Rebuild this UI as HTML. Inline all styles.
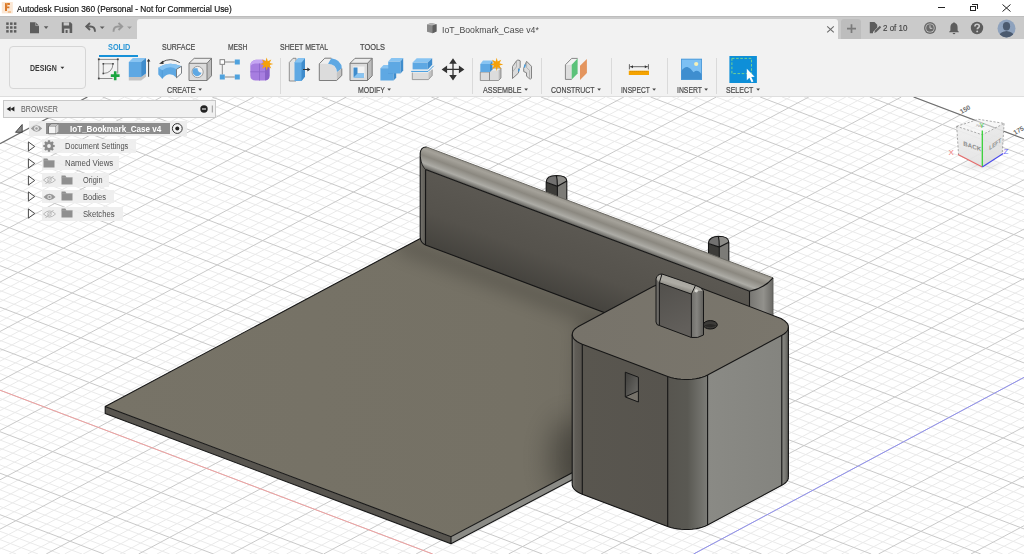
<!DOCTYPE html>
<html><head><meta charset="utf-8">
<style>
*{margin:0;padding:0;box-sizing:border-box}
html,body{width:1024px;height:554px;overflow:hidden;background:#fff;font-family:"Liberation Sans",sans-serif;position:relative}
.a{position:absolute}
#title{left:0;top:0;width:1024px;height:16px;background:#fff}
#tabs{left:0;top:16px;width:1024px;height:23px;background:#cacaca;border-top:1px solid #bdbdbd}
#tab{left:137px;top:19px;width:701px;height:20px;background:#f2f2f2;border-radius:3px 3px 0 0}
#tool{left:0;top:39px;width:1024px;height:58px;background:#f2f2f2}
#vp{left:0;top:97px;width:1024px;height:457px}
.t{position:absolute;white-space:nowrap;line-height:1;transform-origin:0 50%}
</style></head><body>
<div class="a" id="title"></div>
<div class="a" id="tabs"></div>
<div class="a" id="tab"></div>
<div class="a" id="tool"></div>
<svg class="a" id="vp" width="1024" height="457" viewBox="0 97 1024 457">
<defs>
<linearGradient id="gPlate" gradientUnits="userSpaceOnUse" x1="105" y1="400" x2="700" y2="400"><stop offset="0" stop-color="#777367"/><stop offset="0.7" stop-color="#757165"/><stop offset="1" stop-color="#6e6a60"/></linearGradient>
<linearGradient id="gWall" gradientUnits="userSpaceOnUse" x1="600" y1="235.1" x2="574.8" y2="301.6"><stop offset="0" stop-color="#5b5852"/><stop offset="0.55" stop-color="#55524c"/><stop offset="1" stop-color="#45433e"/></linearGradient>
<linearGradient id="aoWall" gradientUnits="userSpaceOnUse" x1="500" y1="273.1" x2="492.9" y2="291.8"><stop offset="0" stop-color="#000" stop-opacity="0.2"/><stop offset="1" stop-color="#000" stop-opacity="0"/></linearGradient>
<linearGradient id="aoBox" gradientUnits="userSpaceOnUse" x1="572" y1="0" x2="530" y2="0"><stop offset="0" stop-color="#000" stop-opacity="0.16"/><stop offset="1" stop-color="#000" stop-opacity="0"/></linearGradient>
<filter id="fBlur" x="-20%" y="-20%" width="140%" height="140%"><feGaussianBlur stdDeviation="9"/></filter>
<filter id="fBlur2" x="-100%" y="-100%" width="300%" height="300%"><feGaussianBlur stdDeviation="14"/></filter>
<clipPath id="cpPlate"><path d="M105.2 406.4L420.3 238.4L769 369L451 536.7Z"/></clipPath>
<linearGradient id="gWallL" x1="0" y1="0" x2="1" y2="0"><stop offset="0" stop-color="#75736d"/><stop offset="1" stop-color="#57554f"/></linearGradient>
<linearGradient id="gWallR" x1="0" y1="0" x2="1" y2="0"><stop offset="0" stop-color="#777672"/><stop offset="0.6" stop-color="#92918c"/><stop offset="1" stop-color="#6a6965"/></linearGradient>
<linearGradient id="gLip" gradientUnits="userSpaceOnUse" x1="600" y1="212.5" x2="592.4" y2="232.6"><stop offset="0" stop-color="#96938b"/><stop offset="0.15" stop-color="#a5a29a"/><stop offset="0.42" stop-color="#8b8880"/><stop offset="0.75" stop-color="#adaca6"/><stop offset="0.92" stop-color="#767570"/><stop offset="1" stop-color="#5a5954"/></linearGradient>
<linearGradient id="gBoxL" x1="0" y1="0" x2="1" y2="0"><stop offset="0" stop-color="#59564f"/><stop offset="1" stop-color="#57544e"/></linearGradient>
<linearGradient id="gBoxR" x1="0" y1="0" x2="1" y2="0"><stop offset="0" stop-color="#8a8a85"/><stop offset="1" stop-color="#84847f"/></linearGradient>
<linearGradient id="gBoxC" x1="0" y1="0" x2="1" y2="0"><stop offset="0" stop-color="#57554f"/><stop offset="0.5" stop-color="#5a5953"/><stop offset="1" stop-color="#7c7c77"/></linearGradient>
<linearGradient id="gBoxCL" x1="0" y1="0" x2="1" y2="0"><stop offset="0" stop-color="#7a7872"/><stop offset="0.3" stop-color="#605d57"/><stop offset="1" stop-color="#57544e"/></linearGradient>
<linearGradient id="gBoxCR" x1="0" y1="0" x2="1" y2="0"><stop offset="0" stop-color="#8a8a85"/><stop offset="0.5" stop-color="#7a7a75"/><stop offset="1" stop-color="#5a5955"/></linearGradient>
<linearGradient id="gTop" x1="0" y1="0" x2="1" y2="0"><stop offset="0" stop-color="#77736a"/><stop offset="1" stop-color="#7a766c"/></linearGradient>
<linearGradient id="gSlot" x1="0" y1="0" x2="1" y2="1"><stop offset="0" stop-color="#3f3e3b"/><stop offset="1" stop-color="#72716d"/></linearGradient>
<linearGradient id="gPinF" x1="0" y1="0" x2="0.3" y2="1"><stop offset="0" stop-color="#52504c"/><stop offset="1" stop-color="#625f5b"/></linearGradient>
<linearGradient id="gPinR" x1="0" y1="0" x2="1" y2="0"><stop offset="0" stop-color="#6f6e6a"/><stop offset="0.45" stop-color="#858480"/><stop offset="1" stop-color="#5f5e5a"/></linearGradient>
<linearGradient id="gPinT" gradientUnits="userSpaceOnUse" x1="678" y1="279" x2="675" y2="289"><stop offset="0" stop-color="#a7a59e"/><stop offset="0.5" stop-color="#aeaca5"/><stop offset="1" stop-color="#85837c"/></linearGradient>
</defs>
<path d="M913.6 97.0L1024.0 138.8M891.7 97.0L1024.0 147.1M847.8 97.0L1024.0 163.7M825.9 97.0L1024.0 172.0M804.0 97.0L1024.0 180.3M782.1 97.0L1024.0 188.6M738.2 97.0L1024.0 205.2M716.3 97.0L1024.0 213.5M694.4 97.0L1024.0 221.8M672.4 97.0L1024.0 230.1M628.6 97.0L1024.0 246.7M606.7 97.0L1024.0 255.0M584.8 97.0L1024.0 263.3M562.8 97.0L1024.0 271.6M519.0 97.0L1024.0 288.2M497.1 97.0L1024.0 296.5M475.2 97.0L1024.0 304.8M453.2 97.0L1024.0 313.1M409.4 97.0L1024.0 329.7M387.5 97.0L1024.0 338.0M365.5 97.0L1024.0 346.3M343.6 97.0L1024.0 354.6M299.8 97.0L1024.0 371.2M277.9 97.0L1024.0 379.5M255.9 97.0L1024.0 387.8M234.0 97.0L1024.0 396.1M190.2 97.0L1024.0 412.7M168.2 97.0L1024.0 421.0M146.3 97.0L1024.0 429.3M124.4 97.0L1024.0 437.6M84.6 98.5L1024.0 454.2M75.5 103.4L1024.0 462.5M66.4 108.2L1024.0 470.8M57.3 113.1L1024.0 479.1M39.1 122.8L1024.0 495.7M30.0 127.7L1024.0 504.0M20.9 132.5L1024.0 512.3M11.8 137.4L1024.0 520.6M0.0 149.5L1024.0 537.2M0.0 157.8L1024.0 545.5M0.0 166.1L1024.0 553.8M0.0 174.4L1002.7 554.0M0.0 191.0L958.9 554.0M0.0 199.3L936.9 554.0M0.0 207.6L915.0 554.0M0.0 215.9L893.1 554.0M0.0 232.5L849.2 554.0M0.0 240.8L827.3 554.0M0.0 249.1L805.4 554.0M0.0 257.4L783.5 554.0M0.0 274.0L739.6 554.0M0.0 282.3L717.7 554.0M0.0 290.6L695.8 554.0M0.0 298.9L673.9 554.0M0.0 315.5L630.0 554.0M0.0 323.8L608.1 554.0M0.0 332.1L586.2 554.0M0.0 340.4L564.3 554.0M0.0 357.0L520.4 554.0M0.0 365.3L498.5 554.0M0.0 373.6L476.6 554.0M0.0 381.9L454.6 554.0M0.0 398.5L410.8 554.0M0.0 406.8L388.9 554.0M0.0 415.1L367.0 554.0M0.0 423.4L345.0 554.0M0.0 440.0L301.2 554.0M0.0 448.3L279.3 554.0M0.0 456.6L257.3 554.0M0.0 464.9L235.4 554.0M-0.0 481.5L191.6 554.0M0.0 489.8L169.7 554.0M0.0 498.1L147.7 554.0M0.0 506.4L125.8 554.0M0.0 523.0L82.0 554.0M0.0 531.3L60.1 554.0M0.0 539.6L38.1 554.0M0.0 547.9L16.2 554.0M87.4 97.0L0.0 143.7M105.9 97.0L0.0 153.6M124.4 97.0L0.0 163.5M142.9 97.0L0.0 173.4M179.9 97.0L-0.0 193.1M198.4 97.0L0.0 203.0M216.9 97.0L-0.0 212.9M235.4 97.0L0.0 222.8M272.4 97.0L0.0 242.6M290.9 97.0L0.0 252.4M309.4 97.0L0.0 262.3M327.9 97.0L0.0 272.2M364.9 97.0L0.0 292.0M383.4 97.0L0.0 301.9M401.8 97.0L0.0 311.8M420.3 97.0L0.0 321.6M457.3 97.0L0.0 341.4M475.8 97.0L0.0 351.3M494.3 97.0L0.0 361.2M512.8 97.0L0.0 371.1M549.8 97.0L0.0 390.8M568.3 97.0L0.0 400.7M586.8 97.0L0.0 410.6M605.3 97.0L0.0 420.5M642.3 97.0L0.0 440.3M660.8 97.0L0.0 450.2M679.3 97.0L0.0 460.0M697.8 97.0L0.0 469.9M734.8 97.0L0.0 489.7M753.3 97.0L0.0 499.6M771.8 97.0L0.0 509.5M790.3 97.0L0.0 519.4M827.3 97.0L0.0 539.1M845.8 97.0L0.0 549.0M864.3 97.0L9.2 554.0M882.8 97.0L27.7 554.0M917.2 98.4L64.7 554.0M928.0 102.5L83.2 554.0M938.9 106.6L101.6 554.0M949.7 110.7L120.1 554.0M971.3 118.9L157.1 554.0M982.2 123.0L175.6 554.0M993.0 127.1L194.1 554.0M1003.8 131.2L212.6 554.0M1024.0 140.1L249.6 554.0M1024.0 150.0L268.1 554.0M1024.0 159.9L286.6 554.0M1024.0 169.8L305.1 554.0M1024.0 189.6L342.1 554.0M1024.0 199.5L360.6 554.0M1024.0 209.3L379.1 554.0M1024.0 219.2L397.6 554.0M1024.0 239.0L434.6 554.0M1024.0 248.9L453.1 554.0M1024.0 258.8L471.6 554.0M1024.0 268.7L490.1 554.0M1024.0 288.4L527.1 554.0M1024.0 298.3L545.6 554.0M1024.0 308.2L564.1 554.0M1024.0 318.1L582.6 554.0M1024.0 337.9L619.6 554.0M1024.0 347.7L638.1 554.0M1024.0 357.6L656.6 554.0M1024.0 367.5L675.1 554.0M1024.0 387.3L712.0 554.0M1024.0 397.2L730.5 554.0M1024.0 407.1L749.0 554.0M1024.0 416.9L767.5 554.0M1024.0 436.7L804.5 554.0M1024.0 446.6L823.0 554.0M1024.0 456.5L841.5 554.0M1024.0 466.4L860.0 554.0M1024.0 486.1L897.0 554.0M1024.0 496.0L915.5 554.0M1024.0 505.9L934.0 554.0M1024.0 515.8L952.5 554.0M1024.0 535.6L989.5 554.0M1024.0 545.4L1008.0 554.0" stroke="#eaeaea" stroke-width="1" fill="none"/>
<path d="M869.7 97.0L1024.0 155.4M760.1 97.0L1024.0 196.9M650.5 97.0L1024.0 238.4M540.9 97.0L1024.0 279.9M431.3 97.0L1024.0 321.4M321.7 97.0L1024.0 362.9M212.1 97.0L1024.0 404.4M102.5 97.0L1024.0 445.9M48.2 117.9L1024.0 487.4M2.8 142.2L1024.0 528.9M0.0 182.7L980.8 554.0M0.0 224.2L871.2 554.0M0.0 265.7L761.6 554.0M0.0 307.2L651.9 554.0M0.0 348.7L542.3 554.0M0.0 390.2L432.7 554.0M0.0 431.7L323.1 554.0M0.0 473.2L213.5 554.0M0.0 514.7L103.9 554.0M161.4 97.0L0.0 183.3M253.9 97.0L0.0 232.7M346.4 97.0L0.0 282.1M438.8 97.0L0.0 331.5M531.3 97.0L0.0 381.0M623.8 97.0L0.0 430.4M716.3 97.0L0.0 479.8M808.8 97.0L0.0 529.2M901.3 97.0L46.2 554.0M960.5 114.8L138.6 554.0M1014.7 135.3L231.1 554.0M1024.0 179.7L323.6 554.0M1024.0 229.1L416.1 554.0M1024.0 278.5L508.6 554.0M1024.0 328.0L601.1 554.0M1024.0 377.4L693.6 554.0M1024.0 426.8L786.0 554.0M1024.0 476.3L878.5 554.0M1024.0 525.7L971.0 554.0" stroke="#c9c9c9" stroke-width="1" fill="none"/>
<path d="M913.6 97.0L1024.0 138.8" stroke="#6e6e6e" stroke-width="1.2" fill="none"/>
<path d="M87.4 97.0L0.0 143.7" stroke="#6e6e6e" stroke-width="1.2" fill="none"/>
<path d="M0.0 390.2L432.7 554.0" stroke="#f0a0a0" stroke-width="1" fill="none"/>
<path d="M1024.0 377.4L693.6 554.0" stroke="#9090f0" stroke-width="1" fill="none"/>
<path d="M105.2 406.4L420.3 238.4L769.0 369.0L451.0 536.7Z" fill="url(#gPlate)"/>
<path d="M105.2 406.4L451.0 536.7L451.0 543.7L105.2 413.4Z" fill="#58554f"/>
<path d="M451.0 536.7L769.0 369.0L769.0 376.0L451.0 543.7Z" fill="#8b8b86"/>
<path d="M105.2 406.4L420.3 238.4L769.0 369.0L769.0 376.0L451.0 543.7L105.2 413.4Z" fill="none" stroke="#161616" stroke-width="1.1" stroke-linejoin="round"/>
<path d="M105.2 406.4L451.0 536.7L769.0 369.0M451.0 536.7L451.0 543.7" fill="none" stroke="#161616" stroke-width="1.1"/>
<g clip-path="url(#cpPlate)"><g filter="url(#fBlur)" opacity="0.22"><path d="M400 236L780 378L775 392L395 250Z" fill="#000"/><path d="M689.4 534.7L572 490L578.9 326.2L653 286L800 340L790 480Z" fill="#000"/></g><g filter="url(#fBlur2)" opacity="0.32"><ellipse cx="570" cy="458" rx="20" ry="40" fill="#000"/></g></g>
<path d="M546.2 182.3L557.4 186.3L557.4 208.3L546.2 204.3Z" fill="#3d3c39"/>
<path d="M557.4 186.3L566.8 181.0L566.8 203.0L557.4 208.3Z" fill="#7c7b77"/>
<path d="M546.2 182.3 C546.2 177.3 551.4 175.5 556.4 175.5 C561.9 175.5 566.8 176.5 566.8 181.0 L557.4 186.3 Z" fill="#727170"/>
<path d="M556.4 175.5 C561.9 175.5 566.8 176.5 566.8 181.0 L557.4 186.3 Z" fill="#8d8c88"/>
<path d="M546.2 204.3 L546.2 182.3 C546.2 177.3 551.4 175.5 556.4 175.5 C561.9 175.5 566.8 176.5 566.8 181.0 L566.8 203.0 M546.2 182.3 L557.4 186.3 L566.8 181.0 M556.4 175.5 Q557.4 179.5 557.4 186.3 L557.4 208.3" fill="none" stroke="#161616" stroke-width="1.1"/>
<path d="M708.5 243.6L719.3 247.1L719.3 269.1L708.5 265.6Z" fill="#3d3c39"/>
<path d="M719.3 247.1L728.8 242.3L728.8 264.3L719.3 269.1Z" fill="#7c7b77"/>
<path d="M708.5 243.6 C708.5 238.6 713.4 236.3 718.4 236.3 C723.9 236.3 728.8 237.8 728.8 242.3 L719.3 247.1 Z" fill="#727170"/>
<path d="M718.4 236.3 C723.9 236.3 728.8 237.8 728.8 242.3 L719.3 247.1 Z" fill="#8d8c88"/>
<path d="M708.5 265.6 L708.5 243.6 C708.5 238.6 713.4 236.3 718.4 236.3 C723.9 236.3 728.8 237.8 728.8 242.3 L728.8 264.3 M708.5 243.6 L719.3 247.1 L728.8 242.3 M718.4 236.3 Q719.3 240.3 719.3 247.1 L719.3 269.1" fill="none" stroke="#161616" stroke-width="1.1"/>
<path d="M425.6 169.6L749.5 291.3L749.5 367.6L425.5 244.9Z" fill="url(#gWall)"/>
<path d="M420.2 153 Q421 146.5 426.6 147 L425.6 169.6 L425.5 244.9 Q420.5 243 420.2 237 Z" fill="url(#gWallL)"/>
<path d="M749.5 291.3 Q765 287 773 277.8 L773 380 L749.5 372 Z" fill="url(#gWallR)"/>
<path d="M426.6 147 L773 277.8 Q764 288.5 749.5 291.3 L425.6 169.6 Q420 163 420.2 153 Q421 146.5 426.6 147Z" fill="url(#gLip)"/>
<path d="M426.6 147 L773 277.8" fill="none" stroke="#6a6862" stroke-width="1"/>
<path d="M773 277.8 L773 380" fill="none" stroke="#5a5955" stroke-width="0.9"/>
<path d="M420.3 157 Q421.5 166 425.6 169.6" fill="none" stroke="#222" stroke-width="0.9"/>
<path d="M420.2 153 Q421 146.5 426.6 147 M420.2 153 L420.2 237 Q420.5 243 425.5 244.9 L749.5 367.6 M425.6 169.6 L749.5 291.3 Q764 288.5 773 277.8 M425.6 169.6 L425.5 244.9 M749.5 291.3 L749.5 380" fill="none" stroke="#161616" stroke-width="1.1"/>
<path d="M788.4 477.2L788.3 478.3L788.0 479.4L787.5 480.4L786.7 481.5L785.8 482.5L784.6 483.5L783.3 484.4L781.8 485.3L707.6 525.0L705.0 526.2L702.1 527.2L699.0 528.1L695.6 528.7L692.0 529.2L688.4 529.5L684.7 529.5L681.0 529.3L677.4 528.9L674.0 528.3L670.7 527.5L667.7 526.5L582.3 494.2L580.1 493.2L578.1 492.2L576.3 491.0L574.9 489.8L573.7 488.5L572.9 487.2L572.4 485.8L572.2 484.4L572.2 334.4L572.4 335.8L572.9 337.2L573.7 338.5L574.9 339.8L576.3 341.0L578.1 342.2L580.1 343.2L582.3 344.2L667.7 376.5L670.7 377.5L674.0 378.3L677.4 378.9L681.0 379.3L684.7 379.5L688.4 379.5L692.0 379.2L695.6 378.7L699.0 378.1L702.1 377.2L705.0 376.2L707.6 375.0L781.8 335.3L783.3 334.4L784.6 333.5L785.8 332.5L786.7 331.5L787.5 330.4L788.0 329.4L788.3 328.3L788.4 327.2Z" fill="#5c5a54"/>
<path d="M667.7 526.5L582.3 494.2L582.3 344.2L667.7 376.5Z" fill="url(#gBoxL)"/>
<path d="M707.6 525.0L781.8 485.3L781.8 335.3L707.6 375.0Z" fill="url(#gBoxR)"/>
<path d="M707.6 525.0L705.0 526.2L702.1 527.2L699.0 528.1L695.6 528.7L692.0 529.2L688.4 529.5L684.7 529.5L681.0 529.3L677.4 528.9L674.0 528.3L670.7 527.5L667.7 526.5L667.7 376.5L670.7 377.5L674.0 378.3L677.4 378.9L681.0 379.3L684.7 379.5L688.4 379.5L692.0 379.2L695.6 378.7L699.0 378.1L702.1 377.2L705.0 376.2L707.6 375.0Z" fill="url(#gBoxC)"/>
<path d="M582.3 494.2L580.1 493.2L578.1 492.2L576.3 491.0L574.9 489.8L573.7 488.5L572.9 487.2L572.4 485.8L572.2 484.4L572.2 334.4L572.4 335.8L572.9 337.2L573.7 338.5L574.9 339.8L576.3 341.0L578.1 342.2L580.1 343.2L582.3 344.2Z" fill="url(#gBoxCL)"/>
<path d="M788.4 477.2L788.3 478.3L788.0 479.4L787.5 480.4L786.7 481.5L785.8 482.5L784.6 483.5L783.3 484.4L781.8 485.3L781.8 335.3L783.3 334.4L784.6 333.5L785.8 332.5L786.7 331.5L787.5 330.4L788.0 329.4L788.3 328.3L788.4 327.2Z" fill="url(#gBoxCR)"/>
<path d="M707.6 375.0L705.0 376.2L702.1 377.2L699.0 378.1L695.6 378.7L692.0 379.2L688.4 379.5L684.7 379.5L681.0 379.3L677.4 378.9L674.0 378.3L670.7 377.5L667.7 376.5L582.3 344.2L579.6 343.0L577.3 341.7L575.4 340.3L573.9 338.8L572.9 337.2L572.3 335.5L572.3 333.9L572.7 332.2L573.5 330.6L574.9 329.0L576.7 327.6L578.8 326.2L653.1 286.6L655.6 285.4L658.5 284.3L661.7 283.5L665.1 282.8L668.6 282.4L672.3 282.1L676.0 282.1L679.6 282.3L683.2 282.7L686.7 283.3L689.9 284.1L692.9 285.1L778.3 317.4L781.0 318.6L783.3 319.9L785.2 321.3L786.7 322.8L787.8 324.4L788.3 326.0L788.4 327.7L788.0 329.4L787.1 331.0L785.8 332.5L784.0 334.0L781.8 335.3Z" fill="url(#gTop)"/>
<path d="M707.6 375.0L705.0 376.2L702.1 377.2L699.0 378.1L695.6 378.7L692.0 379.2L688.4 379.5L684.7 379.5L681.0 379.3L677.4 378.9L674.0 378.3L670.7 377.5L667.7 376.5L582.3 344.2L579.6 343.0L577.3 341.7L575.4 340.3L573.9 338.8L572.9 337.2L572.3 335.5L572.3 333.9L572.7 332.2L573.5 330.6L574.9 329.0L576.7 327.6L578.8 326.2L653.1 286.6L655.6 285.4L658.5 284.3L661.7 283.5L665.1 282.8L668.6 282.4L672.3 282.1L676.0 282.1L679.6 282.3L683.2 282.7L686.7 283.3L689.9 284.1L692.9 285.1L778.3 317.4L781.0 318.6L783.3 319.9L785.2 321.3L786.7 322.8L787.8 324.4L788.3 326.0L788.4 327.7L788.0 329.4L787.1 331.0L785.8 332.5L784.0 334.0L781.8 335.3Z" fill="none" stroke="#161616" stroke-width="1.1" stroke-linejoin="round"/>
<path d="M788.4 477.2L788.3 478.3L788.0 479.4L787.5 480.4L786.7 481.5L785.8 482.5L784.6 483.5L783.3 484.4L781.8 485.3L707.6 525.0L705.0 526.2L702.1 527.2L699.0 528.1L695.6 528.7L692.0 529.2L688.4 529.5L684.7 529.5L681.0 529.3L677.4 528.9L674.0 528.3L670.7 527.5L667.7 526.5L582.3 494.2L580.1 493.2L578.1 492.2L576.3 491.0L574.9 489.8L573.7 488.5L572.9 487.2L572.4 485.8L572.2 484.4" fill="none" stroke="#161616" stroke-width="1.1"/>
<path d="M572.2 484.4L572.2 334.4M788.4 477.2L788.4 327.2M667.7 526.5L667.7 376.5M582.3 494.2L582.3 344.2M707.6 525.0L707.6 375.0M781.8 485.3L781.8 335.3" fill="none" stroke="#161616" stroke-width="1.1"/>
<path d="M625.3 372.2 L638.4 377.2 L638.4 402 L625.3 397Z" fill="url(#gSlot)"/>
<path d="M625.8 396.6 L637.9 391.2 L637.9 401.5Z" fill="#77736b"/>
<path d="M625.3 372.2 L638.4 377.2 L638.4 402 L625.3 397Z M625.8 396.6 L637.9 391.2" fill="none" stroke="#161616" stroke-width="1"/>
<ellipse cx="710.3" cy="324.8" rx="7" ry="4.2" fill="#3c3b38" stroke="#111" stroke-width="1"/><path d="M704 325.5Q710 322.5 716.5 325.5Q710 328.8 704 325.5Z" fill="#2a2927"/>
<path d="M659.4 282.7 L691.4 294.1 L691.4 337.5 L659.4 325.5Z" fill="url(#gPinF)"/>
<path d="M691.4 294.1 Q697 289.5 703.5 291 L703.5 335 Q698 338.5 691.4 337.5Z" fill="url(#gPinR)"/>
<path d="M656 279 L659.4 282.7 L659.4 325.5 Q656.5 325.5 656 322Z" fill="#6c6a66"/>
<path d="M656 279 Q657 274 662 274 L695.5 285.4 Q701.5 287 703.5 291 Q697 289.5 691.4 294.1 L659.4 282.7Z" fill="url(#gPinT)"/>
<circle cx="696.3" cy="290.8" r="1.6" fill="#e8e8e4" opacity="0.8"/>
<path d="M656 322 V279 Q657 274 662 274 L695.5 285.4 Q701.5 287 703.5 291 V335 Q698 338.5 691.4 337.5 L659.4 325.5 Q656.5 325.5 656 322 M659.4 282.7 L691.4 294.1 M659.4 282.7 V325.5 M691.4 294.1 V337.5 M662 274 L659.4 282.7 M695.5 285.4 L691.4 294.1" fill="none" stroke="#161616" stroke-width="1"/>
</svg>
<svg class="a" style="left:0px;top:0px;" width="16" height="16" viewBox="0 0 16 16"><rect x="1.8" y="2" width="11" height="11.4" fill="#fbe7d4"/><path d="M5 3H9.9V4.9H7V6.4H9.4V8.2H7V11.1H5Z" fill="#d9782a"/><path d="M5.6 3.6H7.2V6" stroke="#f0a860" stroke-width="0.8" fill="none"/><rect x="7.8" y="11.3" width="3.2" height="1.4" fill="#f0b57e"/></svg>
<div class="t" style="left:17.00px;top:5.00px;font-size:9.20px;color:#111;transform:scaleX(0.9044);-webkit-text-stroke:0.2px #111;">Autodesk Fusion 360 (Personal - Not for Commercial Use)</div>
<div class="a" style="left:938px;top:7px;width:7px;height:1px;background:#222"></div>
<div class="a" style="left:970px;top:6px;width:6px;height:5px;border:1px solid #222"></div>
<div class="a" style="left:972px;top:4px;width:6px;height:5px;border-top:1px solid #222;border-right:1px solid #222"></div>
<svg class="a" style="left:1002px;top:4px;" width="9" height="8" viewBox="0 0 9 8"><path d="M0.5 0.5L8.5 7.5M8.5 0.5L0.5 7.5" stroke="#222" stroke-width="1"/></svg>
<svg class="a" style="left:0px;top:0px;" width="20" height="40" viewBox="0 0 20 40"><rect x="6.20" y="22.40" width="2.5" height="2.5" fill="#5d5d5d"/><rect x="6.20" y="26.25" width="2.5" height="2.5" fill="#5d5d5d"/><rect x="6.20" y="30.10" width="2.5" height="2.5" fill="#5d5d5d"/><rect x="10.05" y="22.40" width="2.5" height="2.5" fill="#5d5d5d"/><rect x="10.05" y="26.25" width="2.5" height="2.5" fill="#5d5d5d"/><rect x="10.05" y="30.10" width="2.5" height="2.5" fill="#5d5d5d"/><rect x="13.90" y="22.40" width="2.5" height="2.5" fill="#5d5d5d"/><rect x="13.90" y="26.25" width="2.5" height="2.5" fill="#5d5d5d"/><rect x="13.90" y="30.10" width="2.5" height="2.5" fill="#5d5d5d"/></svg>
<svg class="a" style="left:29px;top:21px;" width="22" height="14" viewBox="0 0 22 14"><path d="M1 1.3H6.5L10 4.8V12.3H1Z" fill="#5d5d5d"/><path d="M6.7 1.3V4.6H10" fill="none" stroke="#cacaca" stroke-width="0.6"/><path d="M14.8 5.2H19.4L17.1 7.9Z" fill="#5d5d5d"/></svg>
<svg class="a" style="left:61px;top:21px;" width="13" height="13" viewBox="0 0 13 13"><path d="M0.8 1.3H9.5L11.2 3V12H0.8Z" fill="#5d5d5d"/><rect x="2.6" y="1.3" width="5.5" height="3.2" fill="#cacaca"/><rect x="3.2" y="7.6" width="5.4" height="4.4" fill="#cacaca"/><rect x="4.6" y="9" width="2" height="3" fill="#5d5d5d"/></svg>
<svg class="a" style="left:84px;top:20px;" width="22" height="14" viewBox="0 0 22 14"><path d="M6 3L2.3 6.5L6 10" fill="none" stroke="#5d5d5d" stroke-width="1.9" stroke-linejoin="miter"/><path d="M2.8 6.5H6.5Q11 6.5 11 11.8" fill="none" stroke="#5d5d5d" stroke-width="1.9"/><path d="M15.8 6.4H20.6L18.2 9.1Z" fill="#5d5d5d"/></svg>
<svg class="a" style="left:112px;top:20px;" width="22" height="14" viewBox="0 0 22 14"><path d="M6.5 3L10.2 6.5L6.5 10" fill="none" stroke="#999999" stroke-width="1.9"/><path d="M9.7 6.5H6Q1.5 6.5 1.5 11.8" fill="none" stroke="#999999" stroke-width="1.9"/><path d="M15.1 6.4H19.9L17.5 9.1Z" fill="#999999"/></svg>
<svg class="a" style="left:426px;top:22px;" width="12" height="12" viewBox="0 0 12 12"><path d="M1 2.5L5 1L10.5 2.2V9.5L6.5 11.3L1 9.8Z" fill="#8a8a8a"/><path d="M1 2.5L5 1L10.5 2.2L6.5 3.6Z" fill="#b4b4b4"/><path d="M6.5 3.6L10.5 2.2V9.5L6.5 11.3Z" fill="#5e5e5e"/></svg>
<div class="t" style="left:441.90px;top:26.00px;font-size:9.20px;color:#4a4a4a;transform:scaleX(0.9482);">IoT_Bookmark_Case v4*</div>
<svg class="a" style="left:826px;top:25px;" width="9" height="9" viewBox="0 0 9 9"><path d="M1.2 1.3L7.8 7.3M7.8 1.3L1.2 7.3" stroke="#6a6a6a" stroke-width="1.1"/></svg>
<div class="a" style="left:841.4px;top:19px;width:19.5px;height:20px;background:#bdbdbd;border-radius:3px 3px 0 0"></div>
<svg class="a" style="left:846px;top:23px;" width="11" height="11" viewBox="0 0 11 11"><path d="M5.5 1.3V10.1M1 5.7H10" stroke="#7a7a7a" stroke-width="1.7"/></svg>
<svg class="a" style="left:869px;top:21px;" width="13" height="14" viewBox="0 0 13 14"><path d="M0.8 1H5.5L8.2 3.8V6.5L4 11V12.2H0.8Z" fill="#5d5d5d"/><path d="M5.4 12L6 9.6L10.8 4.8L12.2 6.2L7.4 11Z" fill="#5d5d5d"/></svg>
<div class="t" style="left:882.90px;top:24.00px;font-size:9.00px;color:#444;transform:scaleX(0.8860);-webkit-text-stroke:0.15px #444;">2 of 10</div>
<svg class="a" style="left:923px;top:21px;" width="14" height="14" viewBox="0 0 14 14"><circle cx="7" cy="7" r="6" fill="#6a6a6a"/><circle cx="7" cy="7" r="4.6" fill="#cacaca"/><circle cx="7" cy="7" r="3.8" fill="#6a6a6a"/><path d="M7 4.3V7.3H9.3" fill="none" stroke="#cacaca" stroke-width="1"/></svg>
<svg class="a" style="left:947px;top:21px;" width="14" height="14" viewBox="0 0 14 14"><path d="M7 1.2Q7.8 1.2 7.8 2.1Q10.6 2.8 10.6 6.5V9.6L11.8 10.8V11.3H2.2V10.8L3.4 9.6V6.5Q3.4 2.8 6.2 2.1Q6.2 1.2 7 1.2Z" fill="#5d5d5d"/><path d="M5.6 12H8.4Q8.2 13.3 7 13.3Q5.8 13.3 5.6 12Z" fill="#5d5d5d"/></svg>
<svg class="a" style="left:970px;top:21px;" width="14" height="14" viewBox="0 0 14 14"><circle cx="7" cy="7" r="6.2" fill="#5d5d5d"/><path d="M4.9 5.4Q4.9 3.2 7.1 3.2Q9.3 3.2 9.3 5.1Q9.3 6.3 8 7Q7.3 7.4 7.3 8.3" fill="none" stroke="#cacaca" stroke-width="1.6"/><circle cx="7.2" cy="10.4" r="0.95" fill="#cacaca"/></svg>
<svg class="a" style="left:996px;top:18px;" width="21" height="21" viewBox="0 0 21 21"><defs><clipPath id="avc"><circle cx="10.5" cy="10.5" r="9"/></clipPath></defs><circle cx="10.5" cy="10.5" r="9" fill="#8ea2bd"/><g clip-path="url(#avc)"><ellipse cx="10.5" cy="8.3" rx="3.6" ry="4.2" fill="#4b5a6f"/><path d="M2.5 20Q3 13.5 10.5 13Q18 13.5 18.5 20Z" fill="#4b5a6f"/></g></svg>
<div class="a" style="left:0;top:96px;width:1024px;height:1px;background:#dedede"></div>
<div class="a" style="left:8.5px;top:46.3px;width:77.5px;height:43px;border:1px solid #d6d6d6;border-radius:4px;background:#f2f2f2"></div>
<div class="t" style="left:29.80px;top:64.00px;font-size:8.50px;color:#3a3a3a;font-weight:bold;transform:scaleX(0.8232);">DESIGN</div>
<svg class="a" style="left:60px;top:66px;" width="5" height="4" viewBox="0 0 5 4"><path d="M0.5 0.8H4.3L2.4 3Z" fill="#333"/></svg>
<div class="t" style="left:107.60px;top:43.00px;font-size:8.50px;color:#2a96d6;font-weight:bold;transform:scaleX(0.8612);">SOLID</div>
<div class="t" style="left:162.30px;top:43.00px;font-size:8.50px;color:#4a4a4a;transform:scaleX(0.8275);-webkit-text-stroke:0.2px #4a4a4a;">SURFACE</div>
<div class="t" style="left:228.30px;top:43.00px;font-size:8.50px;color:#4a4a4a;transform:scaleX(0.7938);-webkit-text-stroke:0.2px #4a4a4a;">MESH</div>
<div class="t" style="left:280.20px;top:43.00px;font-size:8.50px;color:#4a4a4a;transform:scaleX(0.8244);-webkit-text-stroke:0.2px #4a4a4a;">SHEET METAL</div>
<div class="t" style="left:360.20px;top:43.00px;font-size:8.50px;color:#4a4a4a;transform:scaleX(0.8728);-webkit-text-stroke:0.2px #4a4a4a;">TOOLS</div>
<div class="a" style="left:98.8px;top:54.6px;width:39.1px;height:2px;background:#1791d8"></div>
<div class="a" style="left:280.2px;top:57.5px;width:1px;height:36px;background:#dadada"></div>
<div class="a" style="left:471.7px;top:57.5px;width:1px;height:36px;background:#dadada"></div>
<div class="a" style="left:540.5px;top:57.5px;width:1px;height:36px;background:#dadada"></div>
<div class="a" style="left:610.8px;top:57.5px;width:1px;height:36px;background:#dadada"></div>
<div class="a" style="left:667.3px;top:57.5px;width:1px;height:36px;background:#dadada"></div>
<div class="a" style="left:716.3px;top:57.5px;width:1px;height:36px;background:#dadada"></div>
<div class="t" style="left:167.00px;top:86.00px;font-size:8.50px;color:#4a4a4a;transform:scaleX(0.8424);-webkit-text-stroke:0.2px #4a4a4a;">CREATE</div>
<svg class="a" style="left:197.7px;top:88px;" width="5" height="4" viewBox="0 0 5 4"><path d="M0.3 0.6H4L2.15 2.8Z" fill="#444"/></svg>
<div class="t" style="left:357.90px;top:86.00px;font-size:8.50px;color:#4a4a4a;transform:scaleX(0.8135);-webkit-text-stroke:0.2px #4a4a4a;">MODIFY</div>
<svg class="a" style="left:387.0px;top:88px;" width="5" height="4" viewBox="0 0 5 4"><path d="M0.3 0.6H4L2.15 2.8Z" fill="#444"/></svg>
<div class="t" style="left:483.00px;top:86.00px;font-size:8.50px;color:#4a4a4a;transform:scaleX(0.8403);-webkit-text-stroke:0.2px #4a4a4a;">ASSEMBLE</div>
<svg class="a" style="left:523.7px;top:88px;" width="5" height="4" viewBox="0 0 5 4"><path d="M0.3 0.6H4L2.15 2.8Z" fill="#444"/></svg>
<div class="t" style="left:550.80px;top:86.00px;font-size:8.50px;color:#4a4a4a;transform:scaleX(0.8168);-webkit-text-stroke:0.2px #4a4a4a;">CONSTRUCT</div>
<svg class="a" style="left:596.6px;top:88px;" width="5" height="4" viewBox="0 0 5 4"><path d="M0.3 0.6H4L2.15 2.8Z" fill="#444"/></svg>
<div class="t" style="left:621.10px;top:86.00px;font-size:8.50px;color:#4a4a4a;transform:scaleX(0.7798);-webkit-text-stroke:0.2px #4a4a4a;">INSPECT</div>
<svg class="a" style="left:652.0px;top:88px;" width="5" height="4" viewBox="0 0 5 4"><path d="M0.3 0.6H4L2.15 2.8Z" fill="#444"/></svg>
<div class="t" style="left:676.70px;top:86.00px;font-size:8.50px;color:#4a4a4a;transform:scaleX(0.8058);-webkit-text-stroke:0.2px #4a4a4a;">INSERT</div>
<svg class="a" style="left:703.9px;top:88px;" width="5" height="4" viewBox="0 0 5 4"><path d="M0.3 0.6H4L2.15 2.8Z" fill="#444"/></svg>
<div class="t" style="left:726.00px;top:86.00px;font-size:8.50px;color:#4a4a4a;transform:scaleX(0.8256);-webkit-text-stroke:0.2px #4a4a4a;">SELECT</div>
<svg class="a" style="left:755.5px;top:88px;" width="5" height="4" viewBox="0 0 5 4"><path d="M0.3 0.6H4L2.15 2.8Z" fill="#444"/></svg>
<svg class="a" style="left:96px;top:56px" width="26" height="27" viewBox="96 56 26 27"><rect x="98.8" y="59.3" width="19" height="19.2" fill="none" stroke="#6a6a6a" stroke-width="0.75"/><rect x="97.89999999999999" y="58.4" width="1.8" height="1.8" fill="#444"/><rect x="116.89999999999999" y="58.4" width="1.8" height="1.8" fill="#444"/><rect x="97.89999999999999" y="77.6" width="1.8" height="1.8" fill="#444"/><path d="M103.3 63.8H113M103.3 63.8V73.5M113 63.8Q112.5 73 103.3 73.5" fill="none" stroke="#6a6a6a" stroke-width="0.75"/><rect x="102.5" y="63.0" width="1.6" height="1.6" fill="#444"/><rect x="112.2" y="63.0" width="1.6" height="1.6" fill="#444"/><rect x="102.5" y="72.7" width="1.6" height="1.6" fill="#444"/><rect x="112.5" y="73.5" width="8" height="8" fill="#f0f0f0"/><path d="M110.8 75.6H119.6M115.2 71.2V80.2" stroke="#1ba540" stroke-width="2.6"/></svg>
<svg class="a" style="left:126px;top:56px" width="26" height="27" viewBox="126 56 26 27"><path d="M128.8 77H141.1L146 73.5V76.8L141.1 80.6H128.8Z" fill="#c4c4c4"/><path d="M128.8 62L132.8 58H146L141.1 62Z" fill="#88c4f2"/><path d="M128.8 62H141.1V77H128.8Z" fill="#5ea8e3"/><path d="M141.1 62L146 58V73.5L141.1 77Z" fill="#3f8ccc"/><path d="M148.6 61V76.8" stroke="#333" stroke-width="0.9"/><path d="M146.8 61.5L148.6 58.8L150.4 61.5Z" fill="#333"/></svg>
<svg class="a" style="left:156px;top:56px" width="28" height="27" viewBox="156 56 28 27"><path d="M158.3 67.8Q169 60.5 181.5 66.3V73.3L176.5 77.8Q169.5 70.5 162.3 78.7L158.3 74.5Z" fill="#5ea8e3"/><path d="M158.3 67.8Q169 60.5 181.5 66.3L176.5 69.3Q169.5 64.8 162.3 70.3Z" fill="#88c4f2"/><path d="M162.3 70.3V78.7" stroke="#4a93d0" stroke-width="0.6"/><path d="M176.5 69.3L181.5 66.3V73.3L176.5 77.8Z" fill="#fafafa" stroke="#666" stroke-width="0.8"/><path d="M161.8 62.3Q170.5 56.8 179.8 62.6" fill="none" stroke="#444" stroke-width="0.9"/><path d="M159.1 63.8L163.2 60.4L163.6 64.1Z" fill="#333"/></svg>
<svg class="a" style="left:186px;top:56px" width="28" height="27" viewBox="186 56 28 27"><path d="M189 63.3L194.2 58.3H211.5L207 63.3Z" fill="#ededed"/><path d="M207 63.3L211.5 58.3V75.8L207 80.5Z" fill="#bcbcbc"/><path d="M189 63.3H207V80.5H189Z" fill="#dcdcdc"/><path d="M189 63.3L194.2 58.3H211.5V75.8L207 80.5H189Z M189 63.3H207V80.5M207 63.3L211.5 58.3" fill="none" stroke="#707070" stroke-width="0.9"/><circle cx="197.6" cy="72" r="5.6" fill="#f4f4f4" stroke="#8a8a8a" stroke-width="0.8"/><path d="M194 68.2A4.6 4.6 0 1 0 201.6 72.8A4 4 0 0 1 197.6 68.3Z" fill="#5ea8e3"/></svg>
<svg class="a" style="left:216px;top:56px" width="28" height="27" viewBox="216 56 28 27"><path d="M224.8 62H234.8M222.3 64.5V74.5M224.8 77H234.8" stroke="#888" stroke-width="1"/><rect x="220" y="59.7" width="4.6" height="4.6" fill="#fff" stroke="#777" stroke-width="0.9"/><rect x="234.8" y="59.5" width="5" height="5" fill="#4fa2de"/><rect x="219.8" y="74.5" width="5" height="5" fill="#4fa2de"/><rect x="234.8" y="74.5" width="5" height="5" fill="#4fa2de"/></svg>
<svg class="a" style="left:248px;top:56px" width="28" height="28" viewBox="248 56 28 28"><path d="M250.3 66Q250.3 60.5 256 59.8H263.5L269.5 63V75.5Q269.5 80.5 264 80.6H256Q250.3 80.6 250.3 75.5Z" fill="#a77ee0"/><path d="M250.3 66Q250.3 60.5 256 59.8H263.5L262 63.5H255Q252 63.5 250.3 66Z" fill="#c5a6f2"/><path d="M269.5 63V75.5Q269.5 80 265 80.6V67Z" fill="#8a62c8"/><path d="M259.5 63.5V80.5M250.3 71.8H265" stroke="#8f68cc" stroke-width="0.9"/><path d="M266.7 57.5L267.8 61.3L271.3 59.6L269.6 63L273.4 64L269.6 65.1L271.3 68.5L267.8 66.7L266.7 70.5L265.5 66.7L262 68.5L263.7 65.1L260 64L263.7 63L262 59.6L265.5 61.3Z" fill="#f6a10a"/></svg>
<svg class="a" style="left:287px;top:56px" width="26" height="27" viewBox="287 56 26 27"><path d="M289.3 62.5L293 58.3H296V81H289.3Z" fill="#e4e4e4" stroke="#777" stroke-width="0.8"/><path d="M294.5 62.5L298 58.3H305V76.5L301.5 81H294.5Z" fill="#5ea8e3"/><path d="M301.5 62.5L305 58.3V76.5L301.5 81Z" fill="#3f8ccc"/><path d="M294.5 62.5L298 58.3H305L301.5 62.5Z" fill="#88c4f2"/><path d="M303 69.5H308" stroke="#333" stroke-width="1"/><path d="M307.3 67.5L310.3 69.5L307.3 71.5Z" fill="#333"/></svg>
<svg class="a" style="left:316px;top:56px" width="28" height="27" viewBox="316 56 28 27"><path d="M319.3 63.8L324.8 58.2H331.3L328 63.8Z" fill="#efefef"/><path d="M319.3 63.8H328Q336.6 64.5 336.6 72.5V80.5H319.3Z" fill="#dcdcdc"/><path d="M331.3 58.2Q341.5 59.5 341.8 68.5L336.9 72.3Q336.5 64.2 328 63.8Z" fill="#5ea8e3"/><path d="M336.6 72.5L341.8 68.5V75.5L336.6 80.5Z" fill="#c4c4c4"/><path d="M319.3 80.5V63.8L324.8 58.2H331.3M341.8 68.5V75.5L336.6 80.5H319.3" fill="none" stroke="#707070" stroke-width="0.9" stroke-linejoin="round"/></svg>
<svg class="a" style="left:348px;top:56px" width="28" height="27" viewBox="348 56 28 27"><path d="M350 63.3L355 58.3H372.2L367.5 63.3Z" fill="#ececec"/><path d="M367.5 63.3L372.2 58.3V75.8L367.5 80.5Z" fill="#bcbcbc"/><path d="M350 63.3H367.5V80.5H350Z" fill="#dcdcdc"/><rect x="353" y="66.5" width="11.5" height="11" fill="#f3f3f3"/><path d="M353.5 67.5H357.5V73.5H364V77.5H353.5Z" fill="#3f8ccc"/><path d="M357.5 73.5H364V77.5H353.5Z" fill="#88c4f2"/><path d="M350 63.3L355 58.3H372.2V75.8L367.5 80.5H350Z M350 63.3H367.5V80.5M367.5 63.3L372.2 58.3" fill="none" stroke="#707070" stroke-width="0.9"/></svg>
<svg class="a" style="left:378px;top:56px" width="28" height="27" viewBox="378 56 28 27"><path d="M380.4 68.2L383.5 65.1H391L388.2 68.2Z" fill="#88c4f2"/><path d="M380.4 68.2H393.5V80.5H380.4Z" fill="#5ea8e3"/><path d="M393.5 73.5L396.2 71V77.8L393.5 80.5Z" fill="#3f8ccc"/><path d="M388.2 61.6L391.4 58.1H403.2L400.5 61.6Z" fill="#88c4f2"/><path d="M388.2 61.6H400.5V73.5H388.2Z" fill="#5ea8e3"/><path d="M400.5 61.6L403.2 58.1V70.6L400.5 73.5Z" fill="#3f8ccc"/><path d="M388.2 73.5H393.5" stroke="#4f98d6" stroke-width="0.5"/></svg>
<svg class="a" style="left:409px;top:56px" width="28" height="27" viewBox="409 56 28 27"><path d="M412.3 72.6H428.4V79.6H412.3Z" fill="#dcdcdc"/><path d="M428.4 72.6L432.2 69.6V75.5L428.4 79.6Z" fill="#c2c2c2"/><path d="M412.3 72.6V79.6H428.4L432.2 75.5V69.6" fill="none" stroke="#8a8a8a" stroke-width="0.8" stroke-linejoin="round"/><path d="M412.6 62.6L416.7 58.2H432.2L427.8 62.6Z" fill="#88c4f2"/><path d="M412.6 62.6H427.8V69.4H412.6Z" fill="#5ea8e3"/><path d="M427.8 62.6L432.2 58.2V64.7L427.8 69.4Z" fill="#3f8ccc"/><path d="M411.2 71.4H428.1L433.7 65.8" fill="none" stroke="#3d9ae0" stroke-width="1"/></svg>
<svg class="a" style="left:440px;top:56px" width="27" height="27" viewBox="440 56 27 27"><path d="M453 61.5V77.5M444.5 69.4H461.5" stroke="#333" stroke-width="1.3"/><path d="M453 58.3L456.8 63.8H449.2Z M453 80.5L456.8 75H449.2Z M441.6 69.4L447.1 65.6V73.2Z M464.4 69.4L458.9 65.6V73.2Z" fill="#333"/></svg>
<svg class="a" style="left:477px;top:56px" width="28" height="28" viewBox="477 56 28 28"><path d="M480.3 72H489.5V80.5H480.3Z" fill="#dcdcdc" stroke="#777" stroke-width="0.7"/><path d="M489.5 70.5L492 68H501L498.5 70.5Z" fill="#ececec"/><path d="M489.5 70.5H498.5V80.5H489.5Z" fill="#dcdcdc"/><path d="M498.5 70.5L501 68V78L498.5 80.5Z" fill="#bcbcbc"/><path d="M489.5 70.5L492 68H501V78L498.5 80.5H489.5Z" fill="none" stroke="#777" stroke-width="0.7"/><path d="M480.3 64L483 60.5H492.5L490 64Z" fill="#88c4f2"/><path d="M480.3 64H490V72H480.3Z" fill="#5ea8e3"/><path d="M490 64L492.5 60.5V69.5L490 72Z" fill="#3f8ccc"/><path d="M496.7 57.8L497.7 61.5L501.2 59.8L499.5 63.3L503.3 64.4L499.5 65.5L501.2 69L497.7 67.3L496.7 71L495.6 67.3L492.1 69L493.8 65.5L490 64.4L493.8 63.3L492.1 59.8L495.6 61.5Z" fill="#f6a10a"/></svg>
<svg class="a" style="left:510px;top:56px" width="26" height="28" viewBox="510 56 26 28"><path d="M512.5 66.5L516.5 60.8Q517.5 59.8 519 60.2L520.2 60.8V67.3L518.5 69V73L512.5 78.5Z" fill="#dcdcdc" stroke="#777" stroke-width="0.9" stroke-linejoin="round"/><path d="M516.5 60.8V66.8L512.5 72" fill="none" stroke="#999" stroke-width="0.6"/><path d="M523.7 68.3L526.6 61.3L531.5 66.3V78.3Q530.7 79.5 529.3 78.8L526.5 76V72.8L523.7 71.5Z" fill="#dcdcdc" stroke="#777" stroke-width="0.9" stroke-linejoin="round"/><path d="M526.6 61.3V67.5L529.5 70.5V78.5" fill="none" stroke="#999" stroke-width="0.6"/><path d="M519.3 68.8L518.6 71.5M525.2 64.5L524.4 67.5" stroke="#3d9ae0" stroke-width="1.4"/></svg>
<svg class="a" style="left:562px;top:56px" width="28" height="28" viewBox="562 56 28 28"><path d="M565.4 64.8L571.7 58.4H577.6L571.7 64.8Z" fill="#f2f2f2"/><path d="M565.4 64.8H571.7V79.4H565.4Z" fill="#dedede"/><path d="M571.7 64.8L577.6 58.6V73.6L571.7 79.4Z" fill="#5cc27a"/><path d="M565.4 79.4V64.8L571.7 58.4H577.6M565.4 79.4H571.7" fill="none" stroke="#7a7a7a" stroke-width="0.9" stroke-linejoin="round"/><path d="M580 65.7L586.9 58.9V73.1L580 79.9Z" fill="#e4955e"/></svg>
<svg class="a" style="left:627px;top:56px" width="26" height="26" viewBox="627 56 26 26"><path d="M630 66.7H648" stroke="#555" stroke-width="0.9"/><path d="M629.4 64.2V69.4M648.4 64.2V69.4" stroke="#555" stroke-width="0.9"/><path d="M630.5 66.7L633 65.2V68.2Z M647.3 66.7L644.8 65.2V68.2Z" fill="#333"/><rect x="628.8" y="70.7" width="20.2" height="4.3" fill="#f5a300"/><path d="M630.5 71.5H647.5" stroke="#b87400" stroke-width="0.7" stroke-dasharray="0.8 1.2"/></svg>
<svg class="a" style="left:679px;top:56px" width="26" height="26" viewBox="679 56 26 26"><rect x="681" y="58.8" width="21" height="20.9" fill="#7cc0f4"/><path d="M681 79.7V71.5Q684 66.5 687.5 67Q690.5 67.8 693.5 72.3Q696.5 69.8 699 71.5L702 74.5V79.7Z" fill="#3f8ecf"/><rect x="681.4" y="59.2" width="20.2" height="20.1" fill="none" stroke="#4a97d6" stroke-width="0.8"/><circle cx="696.2" cy="64" r="2.1" fill="#f4f0b8"/></svg>
<svg class="a" style="left:728px;top:55px" width="30" height="30" viewBox="728 55 30 30"><rect x="729.4" y="56" width="27.5" height="27" fill="#0e8fd8"/><rect x="731.9" y="58.4" width="19.6" height="15.2" fill="none" stroke="#7fd88a" stroke-width="0.9" stroke-dasharray="2.6 1.6"/><path d="M746.8 68.8V80.2L749.4 77.8L751.6 82.3L753.4 81.4L751.3 77.1L754.6 76.8Z" fill="#fff"/></svg>
<div class="a" style="left:3px;top:100.4px;width:213px;height:17.4px;background:#f0f0f0;border:1px solid #c8c8c8"></div>
<svg class="a" style="left:5px;top:105px" width="11" height="8" viewBox="0 0 11 8"><path d="M5.6 1.4L1.6 4L5.6 6.6Z M9.4 1.4L5.4 4L9.4 6.6Z" fill="#222"/></svg>
<div class="t" style="left:21.00px;top:105.00px;font-size:8.50px;color:#5a5a5a;transform:scaleX(0.8374);">BROWSER</div>
<svg class="a" style="left:199px;top:104px" width="18" height="10" viewBox="0 0 18 10"><circle cx="5" cy="5" r="3.7" fill="#222"/><path d="M3 5H7" stroke="#f0f0f0" stroke-width="1.1"/><path d="M13.3 1.5V8.5" stroke="#999" stroke-width="1"/></svg>
<div class="a" style="left:29px;top:121.4px;width:158px;height:14.4px;background:rgba(236,236,236,0.92)"></div>
<svg class="a" style="left:14px;top:122px" width="10" height="12" viewBox="0 0 10 12"><path d="M1.5 10.3L8.2 2.5V10.3Z" fill="#8a8a8a" stroke="#3a3a3a" stroke-width="0.9" stroke-linejoin="round"/></svg>
<svg class="a" style="left:30px;top:123px" width="13" height="11" viewBox="0 0 13 11"><path d="M0.8 5.5Q6.5 -0.8 12.2 5.5Q6.5 11.8 0.8 5.5Z" fill="#9c9c9c"/><circle cx="6.5" cy="5.5" r="2.4" fill="#ececec"/><circle cx="6.5" cy="5.5" r="1.3" fill="#9c9c9c"/></svg>
<div class="a" style="left:46.2px;top:123px;width:123.5px;height:11.3px;background:#8c8c8c"></div>
<svg class="a" style="left:47px;top:123px" width="13" height="12" viewBox="0 0 13 12"><path d="M1.5 3L4 1H11.5V8.5L9 10.8H1.5Z" fill="#f4f4f4" stroke="#666" stroke-width="0.8"/><path d="M1.5 3H9V10.8M9 3L11.5 1" fill="none" stroke="#666" stroke-width="0.8"/><path d="M9 3L11.5 1V8.5L9 10.8Z" fill="#d4d4d4"/></svg>
<div class="t" style="left:69.80px;top:125.00px;font-size:8.50px;color:#ffffff;font-weight:bold;transform:scaleX(0.9514);">IoT_Bookmark_Case v4</div>
<svg class="a" style="left:171px;top:122px" width="13" height="13" viewBox="0 0 13 13"><circle cx="6.3" cy="6.5" r="4.9" fill="#f4f4f4" stroke="#333" stroke-width="1"/><circle cx="6.3" cy="6.5" r="2" fill="#222"/></svg>
<div class="a" style="left:41.7px;top:139.2px;width:94.2px;height:13.6px;background:rgba(238,238,238,0.92)"></div>
<svg class="a" style="left:26px;top:139.5px" width="11" height="13" viewBox="0 0 11 13"><path d="M2.4 1.9L8.7 6.5L2.4 11.1Z" fill="#fafafa" stroke="#4a4a4a" stroke-width="1" stroke-linejoin="round"/></svg>
<svg class="a" style="left:43px;top:140.0px" width="12" height="12" viewBox="0 0 12 12"><path d="M10.08 4.64L11.69 4.89L11.69 7.11L10.08 7.36L9.85 7.92L10.81 9.24L9.24 10.81L7.92 9.85L7.36 10.08L7.11 11.69L4.89 11.69L4.64 10.08L4.08 9.85L2.76 10.81L1.19 9.24L2.15 7.92L1.92 7.36L0.31 7.11L0.31 4.89L1.92 4.64L2.15 4.08L1.19 2.76L2.76 1.19L4.08 2.15L4.64 1.92L4.89 0.31L7.11 0.31L7.36 1.92L7.92 2.15L9.24 1.19L10.81 2.76L9.85 4.08Z" fill="#8a8a8a"/><circle cx="6" cy="6" r="1.9" fill="#eee"/></svg>
<div class="t" style="left:64.90px;top:142.00px;font-size:8.50px;color:#505050;transform:scaleX(0.8813);">Document Settings</div>
<div class="a" style="left:41.7px;top:156.2px;width:77.1px;height:13.6px;background:rgba(238,238,238,0.92)"></div>
<svg class="a" style="left:26px;top:156.5px" width="11" height="13" viewBox="0 0 11 13"><path d="M2.4 1.9L8.7 6.5L2.4 11.1Z" fill="#fafafa" stroke="#4a4a4a" stroke-width="1" stroke-linejoin="round"/></svg>
<svg class="a" style="left:43px;top:156.5px" width="12" height="12" viewBox="0 0 12 12"><path d="M0.5 2.2V10.5H11.5V3.6H5.6L4.3 1.5H0.5Z" fill="#8f8f8f"/><path d="M0.5 3.6H11.5" stroke="#a4a4a4" stroke-width="0.6"/></svg>
<div class="t" style="left:64.90px;top:159.00px;font-size:8.50px;color:#505050;transform:scaleX(0.9220);">Named Views</div>
<div class="a" style="left:41.7px;top:173.2px;width:66.9px;height:13.6px;background:rgba(238,238,238,0.92)"></div>
<svg class="a" style="left:26px;top:173.5px" width="11" height="13" viewBox="0 0 11 13"><path d="M2.4 1.9L8.7 6.5L2.4 11.1Z" fill="#fafafa" stroke="#4a4a4a" stroke-width="1" stroke-linejoin="round"/></svg>
<svg class="a" style="left:61px;top:173.5px" width="12" height="12" viewBox="0 0 12 12"><path d="M0.5 2.2V10.5H11.5V3.6H5.6L4.3 1.5H0.5Z" fill="#8f8f8f"/><path d="M0.5 3.6H11.5" stroke="#a4a4a4" stroke-width="0.6"/></svg>
<svg class="a" style="left:42.5px;top:175.0px" width="13" height="10" viewBox="-0.5 0 13 10"><path d="M0 5Q6 -1.2 12 5Q6 11.2 0 5Z" fill="none" stroke="#b8b8b8" stroke-width="1"/><circle cx="6" cy="5" r="1.8" fill="none" stroke="#b8b8b8" stroke-width="0.9"/><path d="M2 9L10 1" stroke="#b8b8b8" stroke-width="1"/></svg>
<div class="t" style="left:82.80px;top:176.00px;font-size:8.50px;color:#505050;transform:scaleX(0.8592);">Origin</div>
<div class="a" style="left:41.7px;top:189.9px;width:72.3px;height:13.6px;background:rgba(238,238,238,0.92)"></div>
<svg class="a" style="left:26px;top:190.2px" width="11" height="13" viewBox="0 0 11 13"><path d="M2.4 1.9L8.7 6.5L2.4 11.1Z" fill="#fafafa" stroke="#4a4a4a" stroke-width="1" stroke-linejoin="round"/></svg>
<svg class="a" style="left:61px;top:190.2px" width="12" height="12" viewBox="0 0 12 12"><path d="M0.5 2.2V10.5H11.5V3.6H5.6L4.3 1.5H0.5Z" fill="#8f8f8f"/><path d="M0.5 3.6H11.5" stroke="#a4a4a4" stroke-width="0.6"/></svg>
<svg class="a" style="left:42.5px;top:191.7px" width="13" height="10" viewBox="-0.5 0 13 10"><path d="M0 5Q6 -1.4 12 5Q6 11.4 0 5Z" fill="#999"/><circle cx="6" cy="5" r="2.1" fill="#eee"/><circle cx="6" cy="5" r="1.2" fill="#999"/></svg>
<div class="t" style="left:82.80px;top:193.00px;font-size:8.50px;color:#505050;transform:scaleX(0.8843);">Bodies</div>
<div class="a" style="left:41.7px;top:207.0px;width:81.2px;height:13.6px;background:rgba(238,238,238,0.92)"></div>
<svg class="a" style="left:26px;top:207.3px" width="11" height="13" viewBox="0 0 11 13"><path d="M2.4 1.9L8.7 6.5L2.4 11.1Z" fill="#fafafa" stroke="#4a4a4a" stroke-width="1" stroke-linejoin="round"/></svg>
<svg class="a" style="left:61px;top:207.3px" width="12" height="12" viewBox="0 0 12 12"><path d="M0.5 2.2V10.5H11.5V3.6H5.6L4.3 1.5H0.5Z" fill="#8f8f8f"/><path d="M0.5 3.6H11.5" stroke="#a4a4a4" stroke-width="0.6"/></svg>
<svg class="a" style="left:42.5px;top:208.8px" width="13" height="10" viewBox="-0.5 0 13 10"><path d="M0 5Q6 -1.2 12 5Q6 11.2 0 5Z" fill="none" stroke="#b8b8b8" stroke-width="1"/><circle cx="6" cy="5" r="1.8" fill="none" stroke="#b8b8b8" stroke-width="0.9"/><path d="M2 9L10 1" stroke="#b8b8b8" stroke-width="1"/></svg>
<div class="t" style="left:82.80px;top:210.00px;font-size:8.50px;color:#505050;transform:scaleX(0.9017);">Sketches</div>
<svg class="a" style="left:935px;top:100px" width="89" height="80" viewBox="935 100 89 80">
<defs><linearGradient id="vcL" x1="0" y1="0" x2="0" y2="1"><stop offset="0" stop-color="#efefef"/><stop offset="1" stop-color="#e2e2e2"/></linearGradient>
<linearGradient id="vcR" x1="0" y1="0" x2="0" y2="1"><stop offset="0" stop-color="#e9e9e9"/><stop offset="1" stop-color="#dcdcdc"/></linearGradient>
<radialGradient id="vcS" cx="0.5" cy="0.5" r="0.5"><stop offset="0" stop-color="#000" stop-opacity="0.10"/><stop offset="1" stop-color="#000" stop-opacity="0"/></radialGradient></defs>
<ellipse cx="982" cy="165" rx="24" ry="7" fill="url(#vcS)"/>
<path d="M956.7 126.3L978.5 119.3L1004.1 123.4L982.3 134.8Z" fill="#f1f1f1" fill-opacity="0.6"/>
<path d="M956.7 126.3L982.3 134.8V167L958.6 155.6Z" fill="url(#vcL)" fill-opacity="0.92"/>
<path d="M982.3 134.8L1004.1 123.4L1002.2 153.7L982.3 167Z" fill="url(#vcR)" fill-opacity="0.92"/>
<path d="M956.7 126.3L978.5 119.3L1004.1 123.4L982.3 134.8Z M956.7 126.3L958.6 155.6M1004.1 123.4L1002.2 153.7" fill="none" stroke="#8a8a8a" stroke-width="0.7" stroke-dasharray="2.2 1.6"/>
<text font-size="6.2" font-weight="bold" fill="#8d8d8d" font-family="Liberation Sans" transform="matrix(1 0.33 0 1 963.3 145.5)">BACK</text>
<text font-size="6.2" font-weight="bold" fill="#8d8d8d" font-family="Liberation Sans" transform="matrix(0.78 -0.52 0 1 989.2 150.2)">LEFT</text>
<text font-size="4.5" font-weight="bold" fill="#9a9a9a" font-family="Liberation Sans" transform="matrix(0.9 0.2 -0.5 0.5 975 126)">TOP</text>
<path d="M982.3 130.5V167" stroke="#38d038" stroke-width="1.3"/>
<path d="M982.3 167L958 154.5" stroke="#e56b6b" stroke-width="1.2"/>
<path d="M982.3 167L1003.2 153.5" stroke="#4b4bea" stroke-width="1.2"/>
<text x="948.5" y="155" font-size="8" fill="#f07878" font-family="Liberation Sans">X</text>
<text x="1003.5" y="153.5" font-size="8" fill="#6a6af5" font-family="Liberation Sans">Z</text>
<text x="979.5" y="127.8" font-size="7" fill="#48d048" font-family="Liberation Sans">Y</text>
<text font-size="6.5" font-weight="bold" fill="#6a6a6a" font-family="Liberation Sans" transform="matrix(0.87 -0.5 0.5 0.87 961.5 114)">150</text>
<text font-size="6.5" font-weight="bold" fill="#6a6a6a" font-family="Liberation Sans" transform="matrix(0.87 -0.5 0.5 0.87 1015 135)">175</text>
</svg>
</body></html>
